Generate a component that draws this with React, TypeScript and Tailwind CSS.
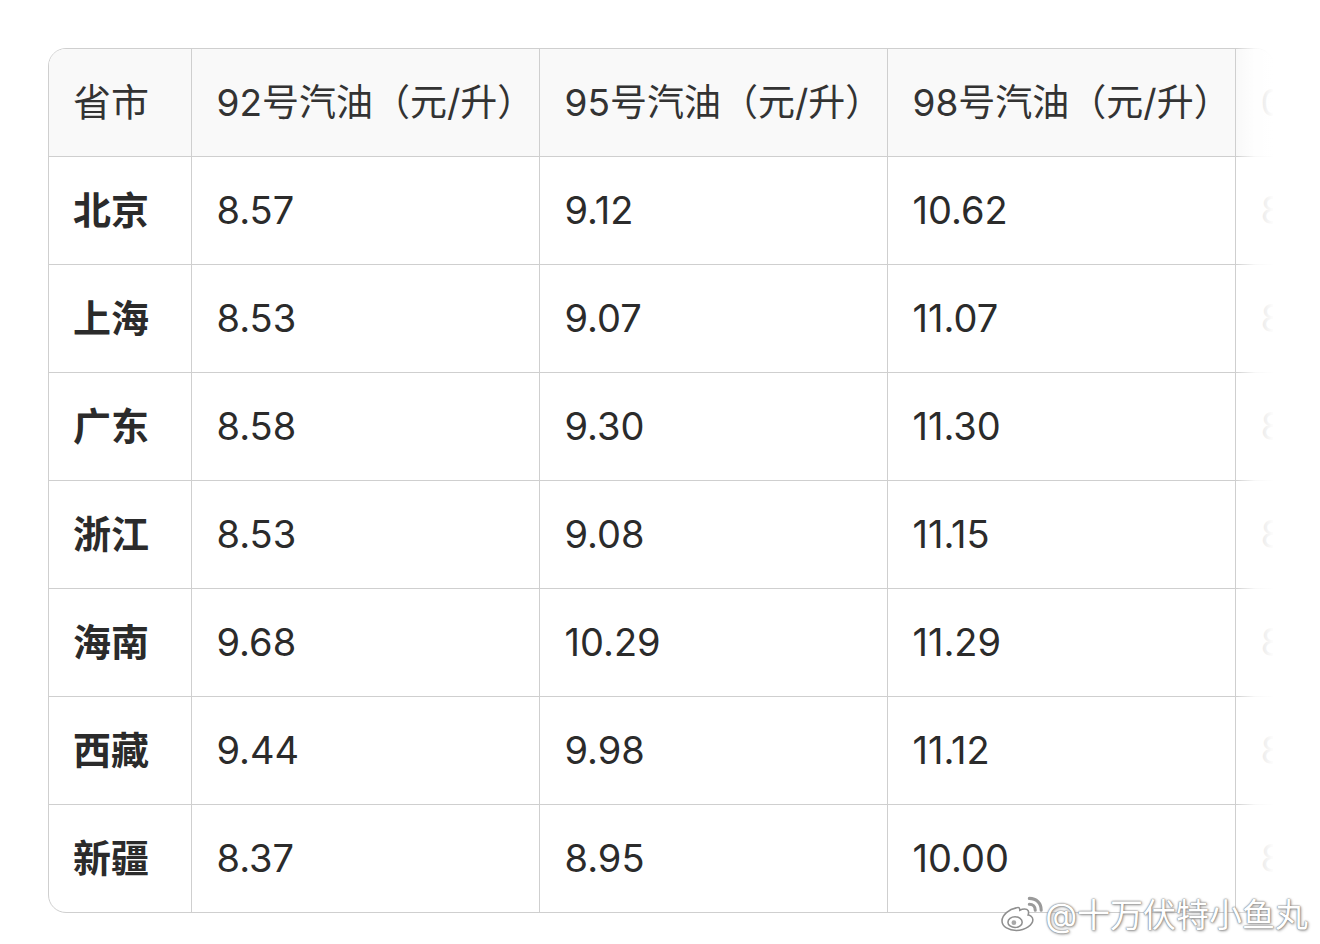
const COLS = ['92号汽油（元/升）', '95号汽油（元/升）', '98号汽油（元/升）', '0号柴油（元/升）']

const ROWS: [string, string, string, string, string][] = [
  ['北京', '8.57', '9.12', '10.62', '8.21'],
  ['上海', '8.53', '9.07', '11.07', '8.14'],
  ['广东', '8.58', '9.30', '11.30', '8.21'],
  ['浙江', '8.53', '9.08', '11.15', '8.16'],
  ['海南', '9.68', '10.29', '11.29', '8.32'],
  ['西藏', '9.44', '9.98', '11.12', '8.79'],
  ['新疆', '8.37', '8.95', '10.00', '8.05'],
]

function WeiboLogo() {
  return (
    <svg width="46" height="38" viewBox="0 0 38 32" fill="none">
      <path
        d="M15 10c-6 1-12 6-12 11 0 5 6 8 12 8 8 0 14-5 14-9 0-3-3-4-4-4 1-3 0-5-3-5-2 0-4 1-4 1 0-2-1-3-3-2z"
        fill="#fff"
        stroke="#8f8f8f"
        strokeWidth="1.3"
      />
      <ellipse cx="14" cy="22" rx="6" ry="4.5" fill="#fff" stroke="#8f8f8f" strokeWidth="1.3" />
      <circle cx="13" cy="22.5" r="2" fill="#a8a8a8" />
      <path d="M26 7c3 0 5 2 5 5" stroke="#9a9a9a" strokeWidth="2.6" strokeLinecap="round" />
      <path d="M26 2c6 0 10 4 10 10" stroke="#9a9a9a" strokeWidth="2.6" strokeLinecap="round" />
    </svg>
  )
}

export default function App() {
  return (
    <div
      className="relative w-[1320px] h-[944px] bg-white overflow-hidden"
      style={{ fontFamily: 'Inter, "Noto Sans CJK SC", sans-serif' }}
    >
      <div className="pt-[48px] pl-[48px]">
        <div className="relative w-[1226px]">
          <div className="rounded-[18px] border border-[#cfcfcf] overflow-hidden">
            <table className="border-collapse text-[38px] text-[#2b2b2b] table-fixed w-[1400px]">
              <colgroup>
                <col className="w-[142px]" />
                <col className="w-[348px]" />
                <col className="w-[348px]" />
                <col className="w-[348px]" />
                <col className="w-[214px]" />
              </colgroup>
              <thead>
                <tr className="h-[107px] bg-[#f9f9f9]">
                  <th className="text-left font-normal pl-[24px] text-[#333] border-r border-[#cfcfcf]">省市</th>
                  {COLS.map(c => (
                    <th
                      key={c}
                      className="text-left text-[37px] font-normal pl-[25px] text-[#333] border-r border-[#cfcfcf] whitespace-nowrap"
                    >
                      {c}
                    </th>
                  ))}
                </tr>
              </thead>
              <tbody>
                {ROWS.map(r => (
                  <tr key={r[0]} className="h-[108px] border-t border-[#cfcfcf]">
                    <td className="pl-[24px] font-bold text-[#2b2b2b] border-r border-[#cfcfcf]">{r[0]}</td>
                    {r.slice(1).map((v, i) => (
                      <td key={i} className="pl-[25px] border-r border-[#cfcfcf]">
                        {v}
                      </td>
                    ))}
                  </tr>
                ))}
              </tbody>
            </table>
          </div>
          {/* right fade */}
          <div className="absolute top-0 right-0 h-full w-[38px] bg-gradient-to-r from-white/0 via-white/85 to-white" />
        </div>
      </div>

      {/* watermark */}
      <div className="absolute right-[12px] bottom-[10px] flex items-center gap-[1px]">
        <WeiboLogo />
        <span
          className="text-[33px] text-white leading-none"
          style={{ textShadow: '0 0 2px #7a7a7a, 0 0 1px #7a7a7a, 1px 1px 3px #9a9a9a' }}
        >
          @十万伏特小鱼丸
        </span>
      </div>
    </div>
  )
}
